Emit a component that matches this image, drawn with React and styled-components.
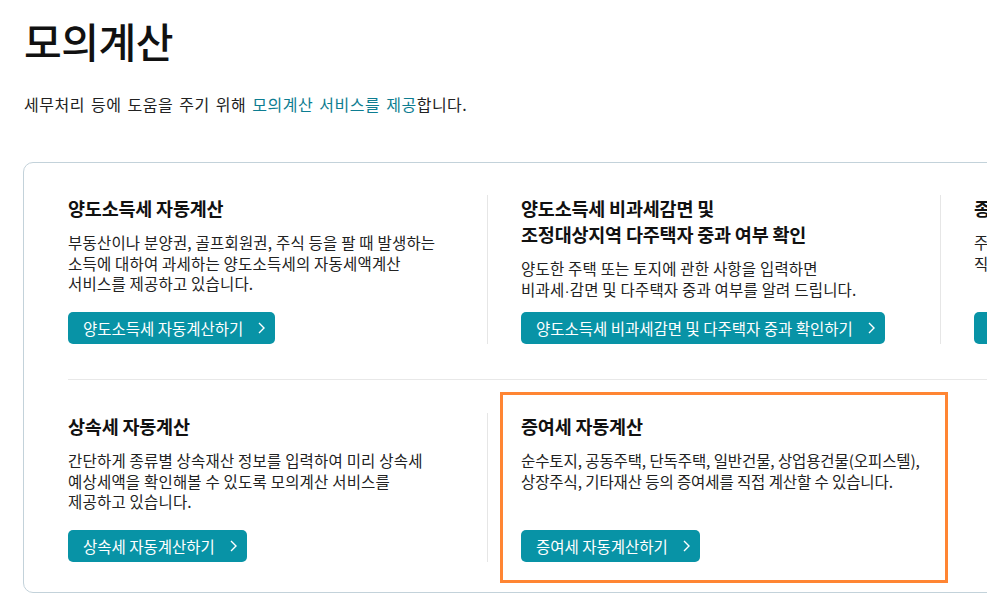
import styled, { createGlobalStyle } from 'styled-components';

const GlobalStyle = createGlobalStyle`
  html, body {
    margin: 0;
    padding: 0;
    overflow: hidden;
    background: #fff;
  }
  body {
    font-family: "Noto Sans CJK KR", "Noto Sans", sans-serif;
    color: #111;
  }
`;

const Dot = styled.span`
  font-family: "Liberation Sans", sans-serif;
`;

const services = [
  {
    title: ['양도소득세 자동계산'],
    desc: ['부동산이나 분양권, 골프회원권, 주식 등을 팔 때 발생하는', '소득에 대하여 과세하는 양도소득세의 자동세액계산', '서비스를 제공하고 있습니다.'],
    button: '양도소득세 자동계산하기',
  },
  {
    title: ['양도소득세 비과세감면 및', '조정대상지역 다주택자 중과 여부 확인'],
    desc: [
      '양도한 주택 또는 토지에 관한 사항을 입력하면',
      <>
        비과세<Dot>·</Dot>감면 및 다주택자 중과 여부를 알려 드립니다.
      </>,
    ],
    button: '양도소득세 비과세감면 및 다주택자 중과 확인하기',
  },
  {
    title: ['종합부동산세 자동계산'],
    desc: ['주택 및 토지 등 보유 자산을 입력하면', '직접 종합부동산세를 계산할 수 있습니다.'],
    button: '종합부동산세 자동계산하기',
  },
];

const services2 = [
  {
    title: ['상속세 자동계산'],
    desc: ['간단하게 종류별 상속재산 정보를 입력하여 미리 상속세', '예상세액을 확인해볼 수 있도록 모의계산 서비스를', '제공하고 있습니다.'],
    button: '상속세 자동계산하기',
  },
  {
    title: ['증여세 자동계산'],
    desc: ['순수토지, 공동주택, 단독주택, 일반건물, 상업용건물(오피스텔),', '상장주식, 기타재산 등의 증여세를 직접 계산할 수 있습니다.'],
    button: '증여세 자동계산하기',
    focused: true,
    tight: true,
  },
];

const Chevron = () => (
  <svg width="7" height="12" viewBox="0 0 7 12" fill="none">
    <polyline points="1,1 6,6 1,11" stroke="#fff" strokeWidth="1.4" />
  </svg>
);

const lines = (arr) =>
  arr.map((l, i) => (
    <span key={i}>
      {l}
      {i < arr.length - 1 && <br />}
    </span>
  ));

const ServiceCell = ({ item, first }) => (
  <Cell $first={first} $focused={item.focused}>
    <CellTitle>{lines(item.title)}</CellTitle>
    <CellDesc $tight={item.tight}>{lines(item.desc)}</CellDesc>
    <CellButton href="#">
      {item.button}
      <Chevron />
    </CellButton>
  </Cell>
);

export default function App() {
  return (
    <Page>
      <GlobalStyle />
      <PageTitle>모의계산</PageTitle>
      <Lead>
        세무처리 등에 도움을 주기 위해 <Accent>모의계산 서비스를 제공</Accent>합니다.
      </Lead>
      <Board>
        <Grid>
          {services.map((s, i) => (
            <ServiceCell key={i} item={s} first={i === 0} />
          ))}
          <Divider />
          {services2.map((s, i) => (
            <ServiceCell key={i} item={s} first={i === 0} />
          ))}
        </Grid>
      </Board>
    </Page>
  );
}

const teal = '#0893a6';

const Page = styled.div`
  padding: 16px 0 0 24px;
`;

const PageTitle = styled.h1`
  margin: 0;
  font-size: 41px;
  line-height: 49px;
  font-weight: 500;
  letter-spacing: -0.5px;
  color: #111;
`;

const Lead = styled.p`
  margin: 27px 0 0;
  font-size: 16px;
  line-height: 24px;
  letter-spacing: 0.5px;
  word-spacing: 2px;
  color: #222;
`;

const Accent = styled.span`
  color: #0d7d91;
`;

const Board = styled.div`
  margin: 46px 0 0 -1px;
  width: 1420px;
  border: 1px solid #c3d2da;
  border-radius: 10px;
  padding: 32px 0 30px 44px;
  box-sizing: border-box;
`;

const Grid = styled.div`
  display: grid;
  grid-template-columns: 419px 453px 453px;
`;

const Divider = styled.div`
  grid-column: 1 / -1;
  height: 1px;
  background: #e8e8e8;
  margin: 35px 0 33px;
`;

const Cell = styled.div`
  position: relative;
  display: flex;
  flex-direction: column;
  min-height: 149px;
  box-sizing: border-box;
  padding-left: ${(p) => (p.$first ? '0' : '33px')};
  border-left: ${(p) => (p.$first ? 'none' : '1px solid #e6e6e6')};

  ${(p) =>
    p.$focused &&
    `
    &::after {
      content: '';
      position: absolute;
      top: -21px;
      bottom: -21px;
      left: 12px;
      right: -8px;
      border: 3px solid #ff8533;
      pointer-events: none;
    }
  `}
`;

const CellTitle = styled.h3`
  margin: 0;
  font-size: 18.5px;
  line-height: 26px;
  font-weight: 700;
  letter-spacing: -0.2px;
  color: #111;
`;

const CellDesc = styled.p`
  margin: 11px 0 10px;
  font-size: 15.5px;
  line-height: 20.5px;
  letter-spacing: ${(p) => (p.$tight ? '-0.1px' : '0.2px')};
  color: #222;
`;

const CellButton = styled.a`
  margin-top: auto;
  align-self: flex-start;
  display: inline-flex;
  align-items: center;
  gap: 15px;
  height: 32px;
  padding: 0 10px 0 15px;
  box-sizing: border-box;
  background: ${teal};
  border-radius: 5px;
  color: #fff;
  text-decoration: none;
  font-size: 15.5px;
  white-space: nowrap;
`;
